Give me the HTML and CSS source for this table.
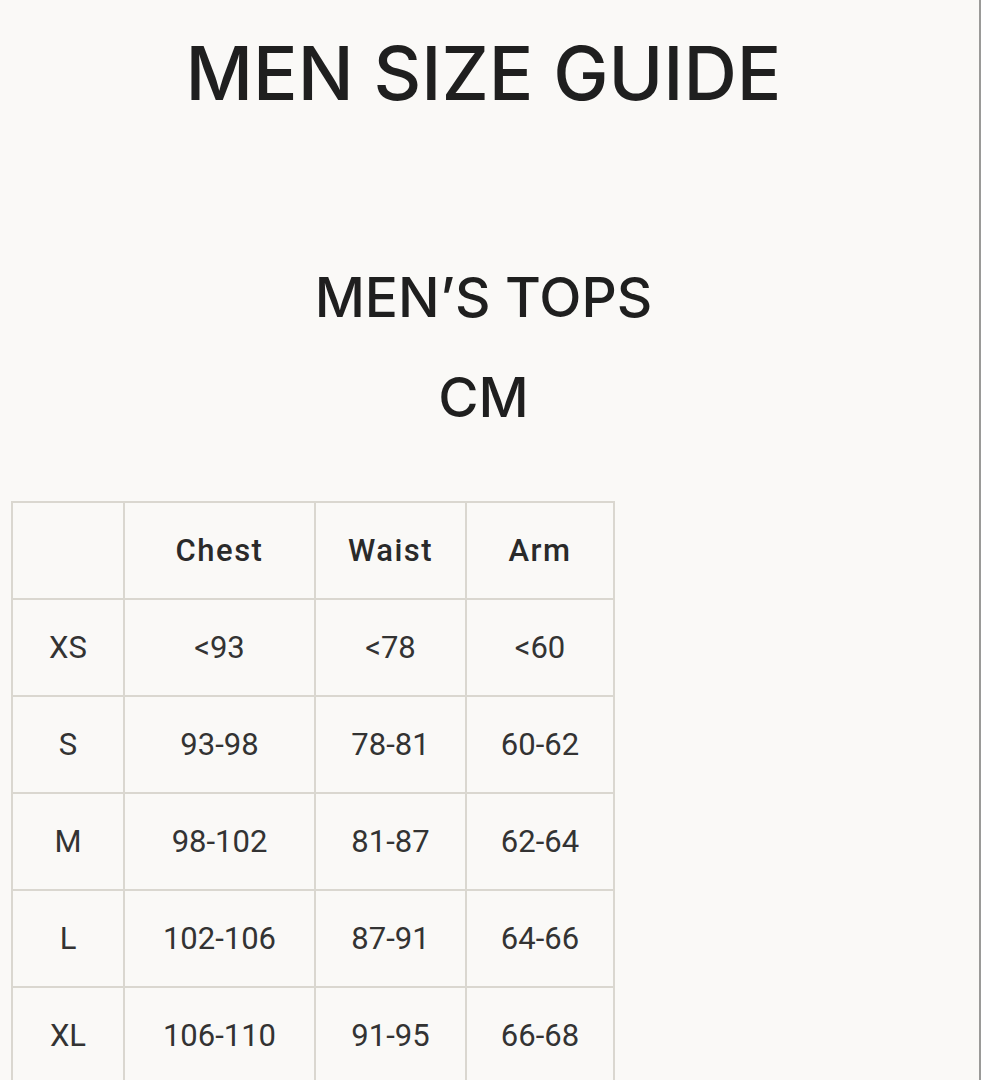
FILE: index.html
```html
<!DOCTYPE html>
<html lang="en">
<head>
<meta charset="utf-8">
<title>Men Size Guide</title>
<link rel="stylesheet" href="styles.css">
</head>
<body>
<main class="page">
  <header class="titles">
    <h1 class="title">MEN SIZE GUIDE</h1>
    <h2 class="subtitle">MEN’S TOPS</h2>
    <h3 class="unit">CM</h3>
  </header>
  <table class="sizes">
    <colgroup>
      <col class="c-size">
      <col class="c-chest">
      <col class="c-waist">
      <col class="c-arm">
    </colgroup>
    <thead>
      <tr><th></th><th>Chest</th><th>Waist</th><th>Arm</th></tr>
    </thead>
    <tbody>
      <tr><td>XS</td><td>&lt;93</td><td>&lt;78</td><td>&lt;60</td></tr>
      <tr><td>S</td><td>93-98</td><td>78-81</td><td>60-62</td></tr>
      <tr><td>M</td><td>98-102</td><td>81-87</td><td>62-64</td></tr>
      <tr><td>L</td><td>102-106</td><td>87-91</td><td>64-66</td></tr>
      <tr><td>XL</td><td>106-110</td><td>91-95</td><td>66-68</td></tr>
    </tbody>
  </table>
</main>
</body>
</html>
```

FILE: styles.css
```css
html, body {
  margin: 0;
  padding: 0;
  background: #faf9f7;
  overflow: hidden;
}

.page {
  box-sizing: border-box;
  width: 981px;
  height: 1080px;
  border-right: 2px solid #9a9a98;
  padding: 0 0 0 11px;
  overflow: hidden;
}

.titles {
  width: 945px;
  text-align: center;
  color: #1f1f1f;
  font-family: "Inter", "Liberation Sans", sans-serif;
  font-weight: 500;
}

.title {
  margin: 0;
  padding-top: 33px;
  font-size: 74px;
  line-height: 80px;
  font-weight: 500;
  letter-spacing: 0;
}

.subtitle {
  margin: 0;
  padding-top: 154px;
  font-size: 55px;
  line-height: 60px;
  font-weight: 500;
}

.unit {
  margin: 0;
  padding-top: 40px;
  font-size: 55px;
  line-height: 60px;
  font-weight: 500;
}

.sizes {
  margin-top: 74px;
  border-collapse: collapse;
  table-layout: fixed;
  width: 604px;
  font-family: "Roboto", "Liberation Sans", sans-serif;
  font-size: 31px;
  color: #333;
}

.c-size { width: 112px; }
.c-chest { width: 191px; }
.c-waist { width: 151px; }
.c-arm { width: 148px; }

.sizes th,
.sizes td {
  border: 2px solid #dad7d0;
  height: 95px;
  padding: 0;
  text-align: center;
  vertical-align: middle;
}

.sizes th {
  font-weight: 500;
  color: #2a2a2a;
  letter-spacing: 1.5px;
}
```
